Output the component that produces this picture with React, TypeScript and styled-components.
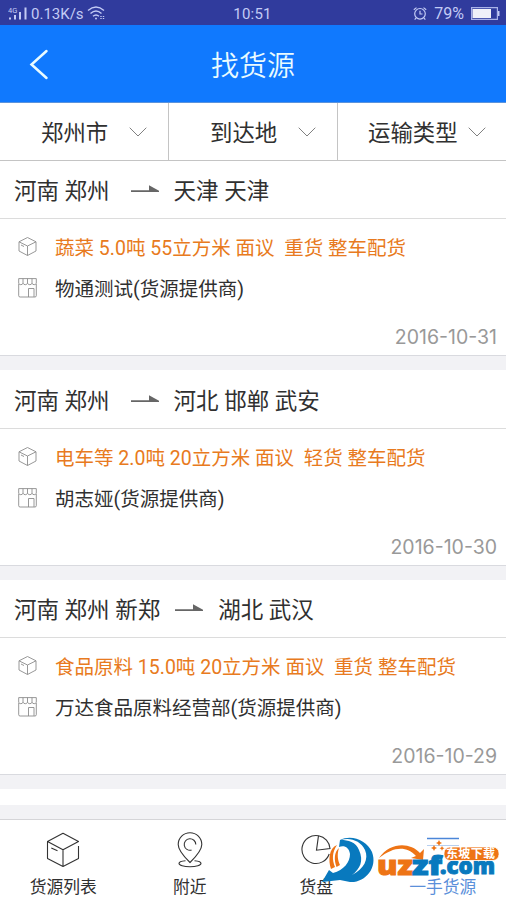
import React from "react";
import styled, { createGlobalStyle } from "styled-components";

const Global = createGlobalStyle`
  * { box-sizing: border-box; }
  body { margin: 0; background: #fff; overflow: hidden; }
  svg { display: block; flex: none; }
`;

const Screen = styled.div`
  position: relative;
  width: 506px;
  height: 900px;
  overflow: hidden;
  display: flex;
  flex-direction: column;
  background: #f2f2f5;
  color: #303030;
  font-family: Roboto, "Noto Sans CJK SC", sans-serif;
  white-space: pre;
`;

const StatusBar = styled.div`
  flex: none;
  height: 25px;
  display: grid;
  grid-template-columns: 1fr auto 1fr;
  align-items: center;
  padding: 2px 6px 0 8px;
  background: #303b9d;
  color: #c3cbf5;
  font: 15px/22px Roboto, sans-serif;
`;

const Clock = styled.span`
  padding-right: 3px;
  letter-spacing: 0.2px;
`;

const StatusGroup = styled.div<{ $end?: boolean }>`
  display: flex;
  align-items: center;
  gap: ${(p) => (p.$end ? 7 : 3)}px;
  justify-content: ${(p) => (p.$end ? "flex-end" : "flex-start")};
`;

const Battery = styled.span`
  font-size: 16px;
`;

const Header = styled.header`
  flex: none;
  height: 78px;
  display: grid;
  grid-template-columns: 80px 1fr 80px;
  align-items: center;
  background: #1079fe;
  border-bottom: 1px solid #5b93dc;
  color: #e9fbff;
`;

const Back = styled.button`
  border: 0;
  padding: 0 0 0 28px;
  background: none;
`;

const Title = styled.h1`
  margin: 0;
  text-align: center;
  font-size: 28px;
  line-height: 40px;
  font-weight: 350;
  padding-top: 7px;
`;

const Filters = styled.div`
  flex: none;
  height: 58px;
  display: grid;
  grid-template-columns: 169px 169px 168px;
  background: #fff;
  border-bottom: 1px solid #c4c4c4;
`;

const Filter = styled.div<{ $left: number; $gap: number }>`
  display: flex;
  align-items: center;
  padding: 3px 0 0 ${(p) => p.$left}px;
  gap: ${(p) => p.$gap}px;
  font-size: 22.4px;
  line-height: 32px;
  border-right: 1px solid #c4c4c4;
  &:last-child { border-right: 0; }
  svg { margin-bottom: 2px; }
`;

const Card = styled.article`
  flex: none;
  margin-bottom: 14px;
  background: #fff;
  border-bottom: 1px solid #d9dadf;
`;

const Route = styled.div<{ $tall?: boolean }>`
  height: ${(p) => (p.$tall ? 59 : 58)}px;
  display: flex;
  align-items: center;
  padding: 3px 14px 0;
  font-size: 22.5px;
  line-height: 32px;
  border-bottom: 1px solid #dcdcdc;
`;

const ArrowSlot = styled.span<{ $left: number; $right: number }>`
  padding: 0 ${(p) => p.$right}px 4px ${(p) => p.$left}px;
`;

const Details = styled.div`
  height: 136px;
  padding: 7px 9px 0 18px;
`;

const Line = styled.div<{ $accent?: boolean }>`
  height: 41px;
  display: flex;
  align-items: center;
  gap: 18px;
  font-size: 19.5px;
  color: ${(p) => (p.$accent ? "#e87a20" : "#303030")};
`;

const DateText = styled.div`
  padding-top: 19px;
  text-align: right;
  color: #999;
  font: 400 19.5px/20px Inter, sans-serif;
`;

const EmptyCard = styled.div`
  flex: none;
  height: 16px;
  margin-bottom: 14px;
  background: #fff;
`;

const TabBar = styled.nav`
  flex: none;
  height: 81px;
  display: grid;
  grid-template-columns: repeat(4, 126.5px);
  background: #fff;
  border-top: 1px solid #d5d5d8;
`;

const Tab = styled.div<{ $active?: boolean }>`
  display: flex;
  flex-direction: column;
  align-items: center;
  padding-top: 12px;
  gap: 7px;
  font-size: 16.8px;
  line-height: 24px;
  color: ${(p) => (p.$active ? "#5b90da" : "#303030")};
`;

const Watermark = styled.div`
  position: absolute;
  left: 322px;
  top: 834px;
`;

const Chevron = () => (
  <svg width="18" height="10" viewBox="0 0 18 10" fill="none" stroke="#808080" strokeWidth="1">
    <path d="M.7.7 9 9 17.3.7" />
  </svg>
);

const Arrow = () => (
  <svg width="28" height="8" viewBox="0 0 28 8">
    <path d="M0 5.3h18V.3l10 5.4V7H0Z" fill="#666" />
  </svg>
);

const SmallBox = () => (
  <svg width="19" height="20" viewBox="0 0 19 20" fill="none" stroke="#8c8c8c" strokeWidth=".9" strokeLinejoin="round">
    <path d="M1 4.800 9.500.5 18 4.800v9.200L9.500 18.500 1 14ZM1 4.800l8.500 4.200L18 4.800M9.500 9V18.500M3 8l3 1.500" />
  </svg>
);

const Shop = () => (
  <svg width="19" height="20" viewBox="0 0 19 20" fill="none" stroke="#8c8c8c" strokeWidth=".9">
    <path d="M.7.6h17.600v4.600q-.3 1.500-2.100 1.500t-2.200-1.500q-.4 1.500-2.200 1.500T9.500 5.200Q9 6.700 7.300 6.700T5 5.200Q4.600 6.700 2.800 6.700T.7 5.200ZM5 .6v4.600M9.500.6v4.600M14 .6v4.600M.7 6v11.800q0 1.200 1.400 1.200h14.800q1.400 0 1.400-1.200V6M10.500 19v-8.500h5.500V19" />
  </svg>
);

const BigBox = () => (
  <svg width="34" height="36" viewBox="0 0 34 36" fill="none" stroke="#333" strokeWidth="1.100" strokeLinejoin="round">
    <path d="M32.500 14v12.500L17 34.500 1.500 26.500V9.500L17 1.300l15.500 8.200L17 17.800 1.500 9.500M17 17.800v16.700M5.300 16l6.200 2.700" />
  </svg>
);

const Pin = () => (
  <svg width="26" height="36" viewBox="0 0 26 36" fill="none" stroke="#333" strokeWidth="1.100">
    <path d="M13 30.500Q1.200 19 1.200 12.500a11.800 11.800 0 0 1 23.600 0Q24.800 19 13 30.500ZM18.800 12.500A5.800 5.800 0 1 0 14.500 18.100" />
    <path d="M8.500 28.700C4.500 29 2 30.100 2 31.500c0 1.700 4.700 3.200 11 3.200s11-1.500 11-3.200c0-1.400-2.500-2.500-6.500-2.800" />
  </svg>
);

const Pie = () => (
  <svg width="30" height="36" viewBox="0 0 30 36" fill="none" stroke="#333" strokeWidth="1.100">
    <path d="M28.200 22A14 14 0 1 1 17.500 3.700l-2 14.500 13.500-1.700A14 14 0 0 0 17.500 3.700" />
  </svg>
);

const ListIcon = () => (
  <svg width="32" height="36" viewBox="0 0 32 36" fill="none" stroke="#4b86d8" strokeWidth="1.500">
    <path d="M0 6.500h32" />
    <path d="M0 13.500h32" opacity=".4" strokeWidth="1" />
  </svg>
);

const listings = [
  {
    from: "河南 郑州",
    to: "天津 天津",
    cargo: "蔬菜 5.0吨 55立方米 面议  重货 整车配货",
    owner: "物通测试(货源提供商)",
    date: "2016-10-31",
    left: 21,
    right: 15,
  },
  {
    from: "河南 郑州",
    to: "河北 邯郸 武安",
    cargo: "电车等 2.0吨 20立方米 面议  轻货 整车配货",
    owner: "胡志娅(货源提供商)",
    date: "2016-10-30",
    left: 21,
    right: 15,
  },
  {
    from: "河南 郑州 新郑",
    to: "湖北 武汉",
    cargo: "食品原料 15.0吨 20立方米 面议  重货 整车配货",
    owner: "万达食品原料经营部(货源提供商)",
    date: "2016-10-29",
    left: 15,
    right: 15,
  },
];

export default function App() {
  return (
    <Screen>
      <Global />
      <StatusBar>
        <StatusGroup>
          <svg width="20" height="16" viewBox="0 0 20 16" fill="#c3cbf5">
            <path d="M1 11.500h2v2H1zM6 9h2v4.500H6zM11 6h2v7.500h-2zM16.500 1.500h2v12h-2z" />
            <text x="0" y="6.500" fontFamily="Roboto, sans-serif" fontSize="7.500">4G</text>
          </svg>
          <span>0.13K/s</span>
          <svg width="18" height="16" viewBox="0 0 18 16" fill="none" stroke="#c3cbf5" strokeWidth="1.400">
            <path d="M1 4.500q8-7 16 0M3.500 7.500q5.500-5 11 0M6 10.300q3-2.600 6 0" />
            <circle cx="9" cy="12.500" r="1" fill="#c3cbf5" stroke="none" />
            <path d="M14 10v3M16.500 10v3" strokeDasharray="1 1" />
          </svg>
        </StatusGroup>
        <Clock>10:51</Clock>
        <StatusGroup $end>
          <svg width="14" height="14" viewBox="0 0 14 14" fill="none" stroke="#c3cbf5" strokeWidth="1.200">
            <circle cx="7" cy="6.800" r="5.300" />
            <path d="M7 3.800v3.200h2.500M.8 2.800 3.500.6M13.200 2.800 10.500.6M3 11l-1.300 1.700M11 11l1.300 1.700" />
          </svg>
          <Battery>79%</Battery>
          <svg width="29" height="14" viewBox="0 0 29 14">
            <path d="M.6.6h25.800v11.800H.6z" fill="none" stroke="#a9b2e8" strokeWidth="1.200" />
            <path d="M1.500 2h18.500v9H1.500z" fill="#f0f1f8" />
            <path d="M27 4h1.500v5H27z" fill="#c3cbf5" />
          </svg>
        </StatusGroup>
      </StatusBar>
      <Header>
        <Back aria-label="返回">
          <svg width="22" height="32" viewBox="0 0 22 32" fill="none" stroke="#e9fbff" strokeWidth="2.500" strokeLinecap="round">
            <path d="M18.500 3 3.500 16.500 18.500 30" />
          </svg>
        </Back>
        <Title>找货源</Title>
      </Header>
      <Filters>
        <Filter $left={41} $gap={21}>郑州市<Chevron /></Filter>
        <Filter $left={41} $gap={21}>到达地<Chevron /></Filter>
        <Filter $left={30} $gap={10}>运输类型<Chevron /></Filter>
      </Filters>
      {listings.map((item, i) => (
        <Card key={item.date}>
          <Route $tall={i === 1}>
            {item.from}
            <ArrowSlot $left={item.left} $right={item.right}><Arrow /></ArrowSlot>
            {item.to}
          </Route>
          <Details>
            <Line $accent><SmallBox />{item.cargo}</Line>
            <Line><Shop />{item.owner}</Line>
            <DateText>{item.date}</DateText>
          </Details>
        </Card>
      ))}
      <EmptyCard />
      <TabBar>
        <Tab><BigBox />货源列表</Tab>
        <Tab><Pin />附近</Tab>
        <Tab><Pie />货盘</Tab>
        <Tab $active><ListIcon />一手货源</Tab>
      </TabBar>
      <Watermark>
        <svg width="184" height="54" viewBox="0 0 184 54">
          <path d="M18 6C29 0 45 6 50 18 56 34 43 49 28 48L18 46 0 48 7 36 11 39C22 36 28 28 28 20 27 13 22 11 17 13Z" fill="#0879be" />
          <path d="M19 6C26 6 34 8 37 16 42 27 38 35 30 41 42 35 47 25 43 16 39 7 28 3 19 6Z" fill="#fff" />
          <path d="M15 11C7 14 6 26 9 35L13 33C10 26 10 18 15 11ZM17 14C12 18 12 26 14.500 33L18 31C15.500 26 15 20 17 14Z" fill="#ee7415" />
          <path d="M57 24C68 8 88 8 98 19L102 15 101 26 89 24 94 22C84 11 71 13 57 24Z" fill="#ee7415" />
          <g fontFamily="Open Sans, sans-serif" fontWeight="800" strokeWidth="1">
            <text x="55" y="40.500" fontSize="27" fill="#ee7415" stroke="#ee7415" textLength="36" lengthAdjust="spacingAndGlyphs">uz</text>
            <text x="90" y="40.500" fontSize="27" fill="#0879be" stroke="#0879be" textLength="30" lengthAdjust="spacingAndGlyphs">zf</text>
            <text x="118" y="40" fontSize="23" fill="#0879be" stroke="#0879be" textLength="55" lengthAdjust="spacingAndGlyphs">.com</text>
          </g>
          <path d="m117 6 1 2 2 1-2 1-1 2-1-2-2-1 2-1ZM112 11l1 2 2 1-2 1-1 2-1-2-2-1 2-1ZM120 12l.8 1.500 1.700.8-1.700.8-.8 1.600-.8-1.600-1.700-.8 1.700-.8Z" fill="#ee7415" />
          <rect x="122" y="13" width="55" height="13.500" rx="6" fill="#ee7415" stroke="#fff" strokeWidth=".8" />
          <text x="124" y="24.300" fontSize="12" fontWeight="700" fill="#fff" textLength="49">东坡下载</text>
        </svg>
      </Watermark>
    </Screen>
  );
}
